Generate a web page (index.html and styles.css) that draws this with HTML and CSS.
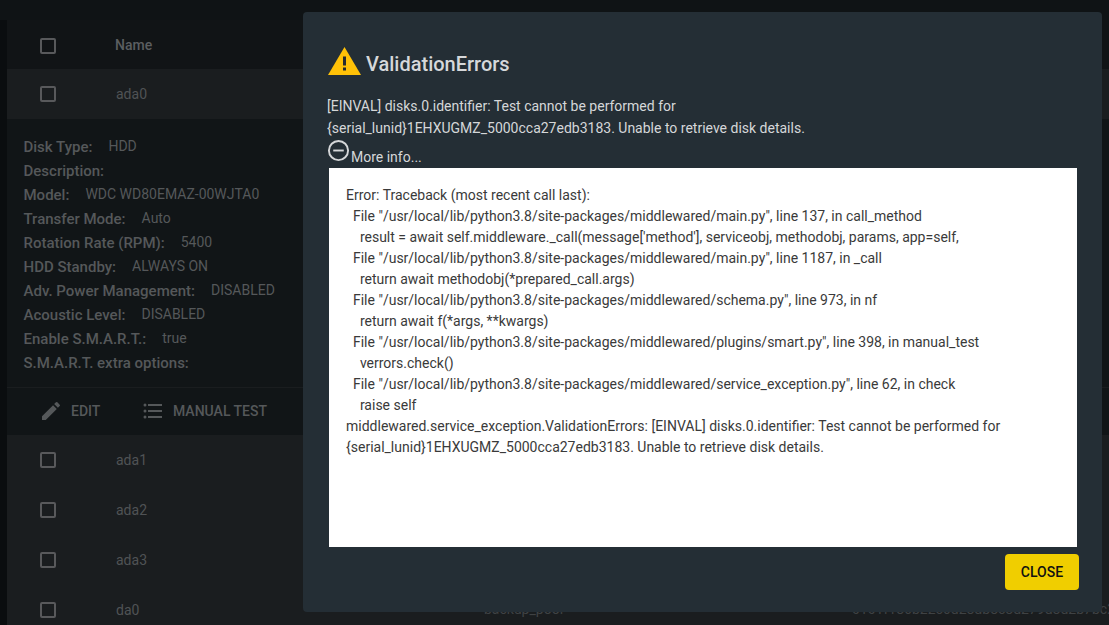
FILE: index.html
```html
<!DOCTYPE html>
<html lang="en">
<head>
<meta charset="utf-8">
<title>Disks</title>
<link rel="stylesheet" href="styles.css">
</head>
<body>
<main class="page">
  <section class="table">
    <div class="row head">
      <span class="check"></span>
      <span class="name">Name</span>
    </div>
    <div class="row disk">
      <span class="check"></span>
      <span class="name">ada0</span>
    </div>
    <div class="details">
      <div class="detail"><b>Disk Type:</b><span>HDD</span></div>
      <div class="detail"><b>Description:</b></div>
      <div class="detail"><b>Model:</b><span>WDC WD80EMAZ-00WJTA0</span></div>
      <div class="detail"><b>Transfer Mode:</b><span>Auto</span></div>
      <div class="detail"><b>Rotation Rate (RPM):</b><span>5400</span></div>
      <div class="detail"><b>HDD Standby:</b><span>ALWAYS ON</span></div>
      <div class="detail"><b>Adv. Power Management:</b><span>DISABLED</span></div>
      <div class="detail"><b>Acoustic Level:</b><span>DISABLED</span></div>
      <div class="detail"><b>Enable S.M.A.R.T.:</b><span>true</span></div>
      <div class="detail"><b>S.M.A.R.T. extra options:</b></div>
    </div>
    <div class="actions">
      <span class="action action-edit">
        <svg class="action-icon pencil" viewBox="0 0 24 24"><path d="M3 17.25V21h3.75L17.81 9.94l-3.75-3.75L3 17.25zM20.71 7.04a1 1 0 0 0 0-1.41l-2.34-2.34a1 1 0 0 0-1.41 0l-1.83 1.83 3.75 3.75 1.83-1.83z"/></svg>
        EDIT
      </span>
      <span class="action">
        <svg class="action-icon" viewBox="0 0 24 24"><circle cx="4" cy="6" r="1.500"/><circle cx="4" cy="12" r="1.500"/><circle cx="4" cy="18" r="1.500"/><path d="M7 5h14v2H7zM7 11h14v2H7zM7 17h14v2H7z"/></svg>
        MANUAL TEST
      </span>
    </div>
    <div class="row disk"><span class="check"></span><span class="name">ada1</span></div>
    <div class="row disk"><span class="check"></span><span class="name">ada2</span></div>
    <div class="row disk"><span class="check"></span><span class="name">ada3</span></div>
    <div class="row disk">
      <span class="check"></span><span class="name">da0</span>
      <span class="pool">backup_pool</span>
      <span class="serial">0101f186b22c6d28db8c8d279d8d2b7bc2</span>
    </div>
  </section>
</main>

<div class="dialog" role="dialog">
  <h1 class="dialog-title">
    <svg class="warn" viewBox="0 0 33 28"><path d="M16.500 0 33 28H0z" fill="#ffc107"/><path d="M15 9.500h3v9h-3zM15 20.500h3v3h-3z" fill="#262b30"/></svg>
    ValidationErrors
  </h1>
  <p class="message">[EINVAL] disks.0.identifier: Test cannot be performed for<br>{serial_lunid}1EHXUGMZ_5000cca27edb3183. Unable to retrieve disk details.</p>
  <div class="more">
    <svg class="minus" viewBox="0 0 24 24"><circle cx="12" cy="12" r="10" fill="none" stroke="#d5d7d9" stroke-width="2"/><path d="M6.500 11h11v2h-11z" fill="#d5d7d9"/></svg>
    <span>More info...</span>
  </div>
  <pre class="trace">Error: Traceback (most recent call last):
  File "/usr/local/lib/python3.8/site-packages/middlewared/main.py", line 137, in call_method
    result = await self.middleware._call(message['method'], serviceobj, methodobj, params, app=self,
  File "/usr/local/lib/python3.8/site-packages/middlewared/main.py", line 1187, in _call
    return await methodobj(*prepared_call.args)
  File "/usr/local/lib/python3.8/site-packages/middlewared/schema.py", line 973, in nf
    return await f(*args, **kwargs)
  File "/usr/local/lib/python3.8/site-packages/middlewared/plugins/smart.py", line 398, in manual_test
    verrors.check()
  File "/usr/local/lib/python3.8/site-packages/middlewared/service_exception.py", line 62, in check
    raise self
middlewared.service_exception.ValidationErrors: [EINVAL] disks.0.identifier: Test cannot be performed for
{serial_lunid}1EHXUGMZ_5000cca27edb3183. Unable to retrieve disk details.</pre>
  <div class="dialog-actions"><button class="close">CLOSE</button></div>
</div>
</body>
</html>
```
FILE: styles.css
```css
* { box-sizing: border-box; }
html, body { margin: 0; height: 100%; overflow: hidden; }
body { background: linear-gradient(to bottom, #0f1315 20px, #0a0d0f 20px); font-family: Roboto, "Liberation Sans", sans-serif; font-size: 14px; }
.page { height: 625px; padding: 20px 0 0 7px; overflow: hidden; }
.table { background: #111517; height: 605px; overflow: hidden; color: #55585a; }
.row { display: flex; align-items: center; height: 50px; position: relative; white-space: nowrap; }
.row.head { height: 49px; background: #111416; }
.row.disk { background: #1a1d1f; }
.check { width: 16px; height: 16px; margin-left: 33px; border: 2px solid #58595b; border-radius: 2px; flex: none; }
.head .check { margin-top: 2px; }
.name { margin-left: 60px; font-size: 14px; color: #505355; }
.head .name { margin-left: 59px; font-weight: 500; color: #5b5e60; }
.details { height: 269px; padding: 16px 0 0 16.500px; border-bottom: 1px solid #1a1d1f; }
.detail { display: flex; height: 24px; line-height: 24px; gap: 16px; }
.detail b { font-size: 15px; font-weight: 500; color: #55585a; }
.detail span { color: #55585a; position: relative; top: -1px; }
.actions { display: flex; align-items: center; height: 47px; padding: 0 0 2px 34px; font-weight: 500; color: #55585a; }
.action { display: flex; align-items: center; gap: 8px; }
.action-edit { width: 100px; }
.action-icon { width: 24px; height: 24px; margin-top: 1px; fill: #55585a; flex: none; }
.pencil { margin-left: -2px; }
.pool { position: absolute; left: 477px; top: 16px; color: #3f4244; }
.serial { position: absolute; left: 845px; top: 16px; color: #3f4244; }
.dialog { position: fixed; left: 303px; top: 12px; width: 799px; height: 600px; padding: 34px 25px 0 24px; background: #242e35; border-radius: 4px; color: #d5d7d9; display: flex; flex-direction: column; }
.dialog-title { display: flex; align-items: center; gap: 5px; margin: 0 0 15px 1px; height: 34px; padding-top: 2px; font-size: 20px; font-weight: 500; line-height: 34px; color: #d6d8da; }
.warn { width: 33px; height: 28px; flex: none; margin-top: -7px; }
.message { margin: 0; font-size: 14px; line-height: 22px; color: #d5d7d9; }
.more { display: flex; align-items: flex-end; height: 29px; margin-left: 1px; padding-bottom: 3px; }
.minus { width: 23px; height: 23px; margin: 0 1px 3px -1px; flex: none; }
.more span { line-height: 16px; }
.trace { margin: 0 0 0 2px; width: 748px; height: 379px; flex: none; padding: 17px 17px 0; background: #fff; color: #3a3a3a; font: 14px/21px Roboto, "Liberation Sans", sans-serif; white-space: pre-wrap; overflow: hidden; }
.dialog-actions { display: flex; justify-content: flex-end; padding: 7px 0 0; margin-right: -2px; }
.close { width: 74px; height: 36px; padding: 0; border: 0; border-radius: 4px; background: #f0ce00; color: #111; font: 500 14px Roboto, "Liberation Sans", sans-serif; }
```
